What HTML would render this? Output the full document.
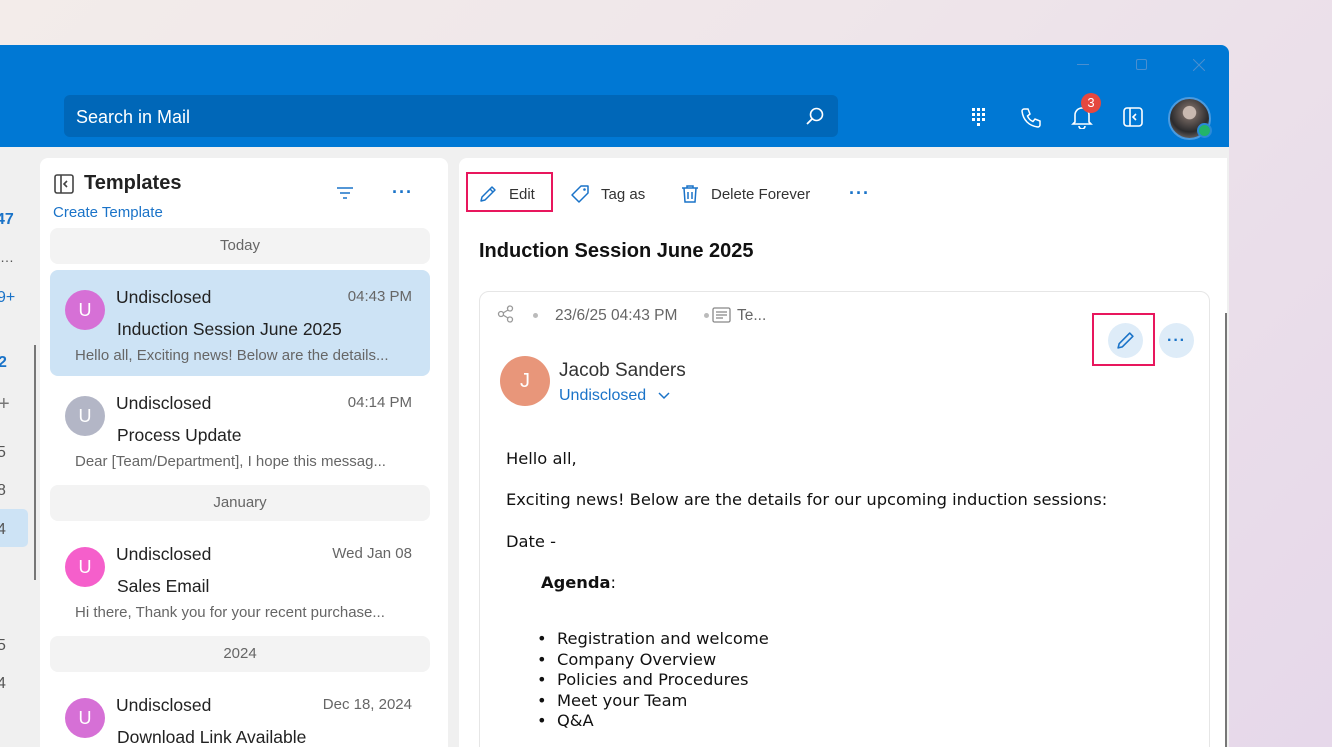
<!DOCTYPE html>
<html><head><meta charset="utf-8">
<style>
*{box-sizing:border-box;margin:0;padding:0}
body{width:1332px;height:747px;overflow:hidden;position:relative;font-family:"Liberation Sans",sans-serif;background:linear-gradient(135deg,#f3ecea 0%,#efe6ea 40%,#e6d8ea 100%)}
.abs{position:absolute}
#win{left:0;top:45px;width:1229px;height:702px;background:#f0f0f0;border-top-right-radius:8px;overflow:hidden}
#title{left:0;top:0;width:1229px;height:102px;background:#0078d4}
#search{left:64px;top:50px;width:774px;height:42px;background:#0067b8;border-radius:6px;color:#fff;font-size:18px;padding:12px 0 0 12px}
.txt{white-space:nowrap}
#list{left:40px;top:113px;width:408px;height:600px;background:#fff;border-radius:8px}
.sep{position:absolute;left:10px;width:380px;height:36px;background:#f3f3f3;border-radius:8px;text-align:center;color:#666;font-size:15px;line-height:36px}
.item{position:absolute;left:10px;width:380px;height:106px;border-radius:8px}
.av{position:absolute;left:15px;width:40px;height:40px;border-radius:50%;color:#fff;font-size:18px;text-align:center;line-height:40px}
.from{position:absolute;left:66px;top:17px;font-size:17.5px;color:#222}
.time{position:absolute;right:18px;top:18px;font-size:15px;color:#666}
.subj{position:absolute;left:67px;top:49px;font-size:17.5px;color:#222}
.prev{position:absolute;left:25px;top:77px;font-size:15px;color:#666}
#read{left:459px;top:113px;width:768px;height:600px;background:#fff;border-radius:8px 0 0 0}
.body{font-family:"DejaVu Sans","Liberation Sans",sans-serif;font-size:16.3px;color:#111}
</style></head><body>
<div id="win" class="abs">
  <div id="title" class="abs">
    <div class="abs" style="left:1077px;top:19px;width:12px;height:1px;background:#4a8fd0"></div>
    <div class="abs" style="left:1136px;top:14px;width:11px;height:11px;border:1px solid #4a8fd0;border-radius:2px"></div>
    <svg class="abs" style="left:1193px;top:14px" width="12" height="12"><path d="M0 0L12 12M12 0L0 12" stroke="#4a8fd0" stroke-width="1"/></svg>
    <div id="search" class="abs txt">Search in Mail
      <svg class="abs" style="right:14px;top:12px" width="18" height="18" viewBox="0 0 18 18"><circle cx="10.5" cy="7.5" r="6" fill="none" stroke="#fff" stroke-width="1.6"/><path d="M6 12L1 17" stroke="#fff" stroke-width="1.8"/></svg>
    </div>
    <svg class="abs" style="left:971px;top:62px" width="18" height="20"><g fill="#fff"><rect x="1" y="1" width="3" height="3"/><rect x="6" y="1" width="3" height="3"/><rect x="11" y="1" width="3" height="3"/><rect x="1" y="6" width="3" height="3"/><rect x="6" y="6" width="3" height="3"/><rect x="11" y="6" width="3" height="3"/><rect x="1" y="11" width="3" height="3"/><rect x="6" y="11" width="3" height="3"/><rect x="11" y="11" width="3" height="3"/><rect x="6" y="16" width="3" height="3"/></g></svg>
    <svg class="abs" style="left:1020px;top:62px" width="22" height="22" viewBox="0 0 22 22"><path d="M4 2l4 0 2 5-2.5 2c1 2.5 3 4.5 5.5 5.5l2-2.5 5 2v4c0 1-1 2-2 2C9 19 3 13 2 4c0-1 1-2 2-2z" fill="none" stroke="#fff" stroke-width="1.5"/></svg>
    <svg class="abs" style="left:1071px;top:60px" width="22" height="24" viewBox="0 0 22 24"><path d="M4 17V10a7 7 0 0 1 14 0v7l2 2H2z" fill="none" stroke="#fff" stroke-width="1.6"/><path d="M8 21a3 3 0 0 0 6 0" fill="none" stroke="#fff" stroke-width="1.6"/></svg>
    <div class="abs" style="left:1081px;top:48px;width:20px;height:20px;border-radius:50%;background:#e5483f;color:#fff;font-size:13px;text-align:center;line-height:20px">3</div>
    <svg class="abs" style="left:1123px;top:62px" width="20" height="20" viewBox="0 0 20 20"><rect x="1" y="1" width="18" height="18" rx="3" fill="none" stroke="#fff" stroke-width="1.6"/><path d="M7 1v18M13 7l-3 3 3 3" fill="none" stroke="#fff" stroke-width="1.6"/></svg>
    <div class="abs" style="left:1168px;top:52px;width:43px;height:43px;border-radius:50%;background:radial-gradient(circle at 50% 35%,#c9b9b0 0 20%,#6b5f5a 22%,#2b2b2d 60%,#9a8f8a 100%);border:2px solid #4a9be0"></div>
    <div class="abs" style="left:1197px;top:78px;width:15px;height:15px;border-radius:50%;background:#22b46a;border:2px solid #2a8ad8"></div>
  </div>
  <div class="abs txt" style="left:-4px;top:166px;color:#1a73c8;font-weight:bold;font-size:16px">47</div>
  <div class="abs txt" style="left:0;top:204px;color:#555;font-size:14px">…</div>
  <div class="abs txt" style="left:-3px;top:244px;color:#1a73c8;font-size:16px">9+</div>
  <div class="abs txt" style="left:-2px;top:309px;color:#1a73c8;font-weight:bold;font-size:16px">2</div>
  <div class="abs txt" style="left:-2px;top:348px;color:#777;font-size:20px">+</div>
  <div class="abs txt" style="left:-3px;top:399px;color:#555;font-size:16px">5</div>
  <div class="abs txt" style="left:-3px;top:437px;color:#555;font-size:16px">8</div>
  <div class="abs" style="left:0;top:464px;width:28px;height:38px;background:#cde3f5;border-radius:0 5px 5px 0"></div>
  <div class="abs txt" style="left:-3px;top:476px;color:#555;font-size:16px">4</div>
  <div class="abs txt" style="left:-3px;top:592px;color:#555;font-size:16px">5</div>
  <div class="abs txt" style="left:-3px;top:630px;color:#555;font-size:16px">4</div>
  <div class="abs" style="left:34px;top:300px;width:2px;height:235px;background:#777"></div>

  <div id="list" class="abs">
    <svg class="abs" style="left:14px;top:16px" width="20" height="20" viewBox="0 0 20 20"><rect x="1" y="1" width="18" height="18" rx="2" fill="none" stroke="#444" stroke-width="1.6"/><path d="M7 1v18M13 7l-3 3 3 3" fill="none" stroke="#444" stroke-width="1.6"/></svg>
    <div class="abs txt" style="left:44px;top:14px;font-size:20px;font-weight:bold;color:#222">Templates</div>
    <div class="abs txt" style="left:13px;top:46px;font-size:15px;color:#1a73c8">Create Template</div>
    <svg class="abs" style="left:296px;top:28px" width="18" height="14"><path d="M1 2h16M4 7h10M7 12h4" stroke="#1a73c8" stroke-width="1.6"/></svg>
    <div class="abs" style="left:352px;top:24px;color:#1a73c8;font-size:18px;font-weight:bold;letter-spacing:1px">···</div>
    <div class="sep" style="top:70px">Today</div>
    <div class="item" style="top:112px;background:#cde3f5">
      <div class="av" style="top:20px;background:#d670d6">U</div>
      <div class="from">Undisclosed</div><div class="time">04:43 PM</div>
      <div class="subj">Induction Session June 2025</div>
      <div class="prev">Hello all, Exciting news! Below are the details...</div>
    </div>
    <div class="item" style="top:218px">
      <div class="av" style="top:20px;background:#b3b6c6">U</div>
      <div class="from">Undisclosed</div><div class="time">04:14 PM</div>
      <div class="subj">Process Update</div>
      <div class="prev">Dear [Team/Department], I hope this messag...</div>
    </div>
    <div class="sep" style="top:327px">January</div>
    <div class="item" style="top:369px">
      <div class="av" style="top:20px;background:#f55fcb">U</div>
      <div class="from">Undisclosed</div><div class="time">Wed Jan 08</div>
      <div class="subj">Sales Email</div>
      <div class="prev">Hi there, Thank you for your recent purchase...</div>
    </div>
    <div class="sep" style="top:478px">2024</div>
    <div class="item" style="top:520px">
      <div class="av" style="top:20px;background:#d670d6">U</div>
      <div class="from">Undisclosed</div><div class="time">Dec 18, 2024</div>
      <div class="subj">Download Link Available</div>
    </div>
  </div>

  <div id="read" class="abs">
    <div class="abs" style="left:7px;top:14px;width:87px;height:40px;border:2px solid #e8175d"></div>
    <svg class="abs" style="left:20px;top:27px" width="18" height="18" viewBox="0 0 18 18"><path d="M2 16l1-4L13 2l3 3L6 15z M11 4l3 3" fill="none" stroke="#1a73c8" stroke-width="1.5" stroke-linejoin="round"/></svg>
    <div class="abs txt" style="left:50px;top:28px;font-size:15px;color:#333">Edit</div>
    <svg class="abs" style="left:111px;top:26px" width="20" height="20" viewBox="0 0 20 20"><path d="M11 2h7v7l-9 9-7-7z" fill="none" stroke="#1a73c8" stroke-width="1.5" stroke-linejoin="round"/><circle cx="14.5" cy="5.5" r="1.3" fill="#1a73c8"/></svg>
    <div class="abs txt" style="left:142px;top:28px;font-size:15px;color:#333">Tag as</div>
    <svg class="abs" style="left:222px;top:26px" width="18" height="20" viewBox="0 0 18 20"><path d="M1 4h16M6 4V2h6v2M3 4l1 14h10l1-14M7 8v7M11 8v7" fill="none" stroke="#1a73c8" stroke-width="1.5"/></svg>
    <div class="abs txt" style="left:252px;top:28px;font-size:15px;color:#333">Delete Forever</div>
    <div class="abs" style="left:390px;top:25px;color:#1a73c8;font-size:18px;font-weight:bold;letter-spacing:1px">···</div>
    <div class="abs txt" style="left:20px;top:82px;font-size:20px;font-weight:bold;color:#111">Induction Session June 2025</div>

    <div class="abs" style="left:20px;top:133px;width:731px;height:480px;border:1px solid #e6e6e6;border-radius:10px">
      <svg class="abs" style="left:17px;top:13px" width="18" height="18" viewBox="0 0 18 18"><circle cx="4" cy="9" r="2.5" fill="none" stroke="#999" stroke-width="1.3"/><circle cx="13" cy="3.5" r="2.5" fill="none" stroke="#999" stroke-width="1.3"/><circle cx="13" cy="14.5" r="2.5" fill="none" stroke="#999" stroke-width="1.3"/><path d="M6 8l5-3M6 10l5 3" stroke="#999" stroke-width="1.3"/></svg>
      <div class="abs" style="left:53px;top:21px;width:5px;height:5px;border-radius:50%;background:#bbb"></div>
      <div class="abs txt" style="left:75px;top:15px;font-size:15.5px;color:#666">23/6/25 04:43 PM</div>
      <div class="abs" style="left:224px;top:21px;width:5px;height:5px;border-radius:50%;background:#bbb"></div>
      <svg class="abs" style="left:232px;top:15px" width="19" height="16"><rect x="1" y="1" width="17" height="14" rx="1.5" fill="none" stroke="#888" stroke-width="1.3"/><path d="M4 5h11M4 8h11M4 11h7" stroke="#888" stroke-width="1.2"/></svg>
      <div class="abs txt" style="left:257px;top:15px;font-size:15.5px;color:#666">Te...</div>
      <div class="abs" style="left:612px;top:21px;width:63px;height:53px;border:2px solid #e8175d"></div>
      <div class="abs" style="left:628px;top:31px;width:35px;height:35px;border-radius:50%;background:#deecf8"></div>
      <svg class="abs" style="left:636px;top:39px" width="19" height="19" viewBox="0 0 18 18"><path d="M2 16l1-4L13 2l3 3L6 15z" fill="none" stroke="#1a73c8" stroke-width="1.5" stroke-linejoin="round"/></svg>
      <div class="abs" style="left:679px;top:31px;width:35px;height:35px;border-radius:50%;background:#deecf8;color:#1a73c8;font-size:16px;font-weight:bold;text-align:center;line-height:36px;letter-spacing:1px">···</div>
      <div class="abs" style="left:20px;top:64px;width:50px;height:50px;border-radius:50%;background:#e8967a;color:#fff;font-size:20px;text-align:center;line-height:50px">J</div>
      <div class="abs txt" style="left:79px;top:68px;font-size:19px;color:#333">Jacob Sanders</div>
      <div class="abs txt" style="left:79px;top:95px;font-size:16px;color:#1a73c8">Undisclosed</div>
      <svg class="abs" style="left:178px;top:99px" width="12" height="10"><path d="M1 2l5 5 5-5" fill="none" stroke="#1a73c8" stroke-width="1.5"/></svg>
      <div class="abs body txt" style="left:26px;top:157px">Hello all,</div>
      <div class="abs body txt" style="left:26px;top:198px">Exciting news! Below are the details for our upcoming induction sessions:</div>
      <div class="abs body txt" style="left:26px;top:240px">Date -</div>
      <div class="abs body txt" style="left:61px;top:281px"><b>Agenda</b>:</div>
      <div class="abs body txt" style="left:57px;top:337px;line-height:20.5px">• &nbsp;Registration and welcome<br>• &nbsp;Company Overview<br>• &nbsp;Policies and Procedures<br>• &nbsp;Meet your Team<br>• &nbsp;Q&amp;A</div>
    </div>
    <div class="abs" style="left:766px;top:155px;width:2px;height:450px;background:#777"></div>
  </div>
</div>
</body></html>
